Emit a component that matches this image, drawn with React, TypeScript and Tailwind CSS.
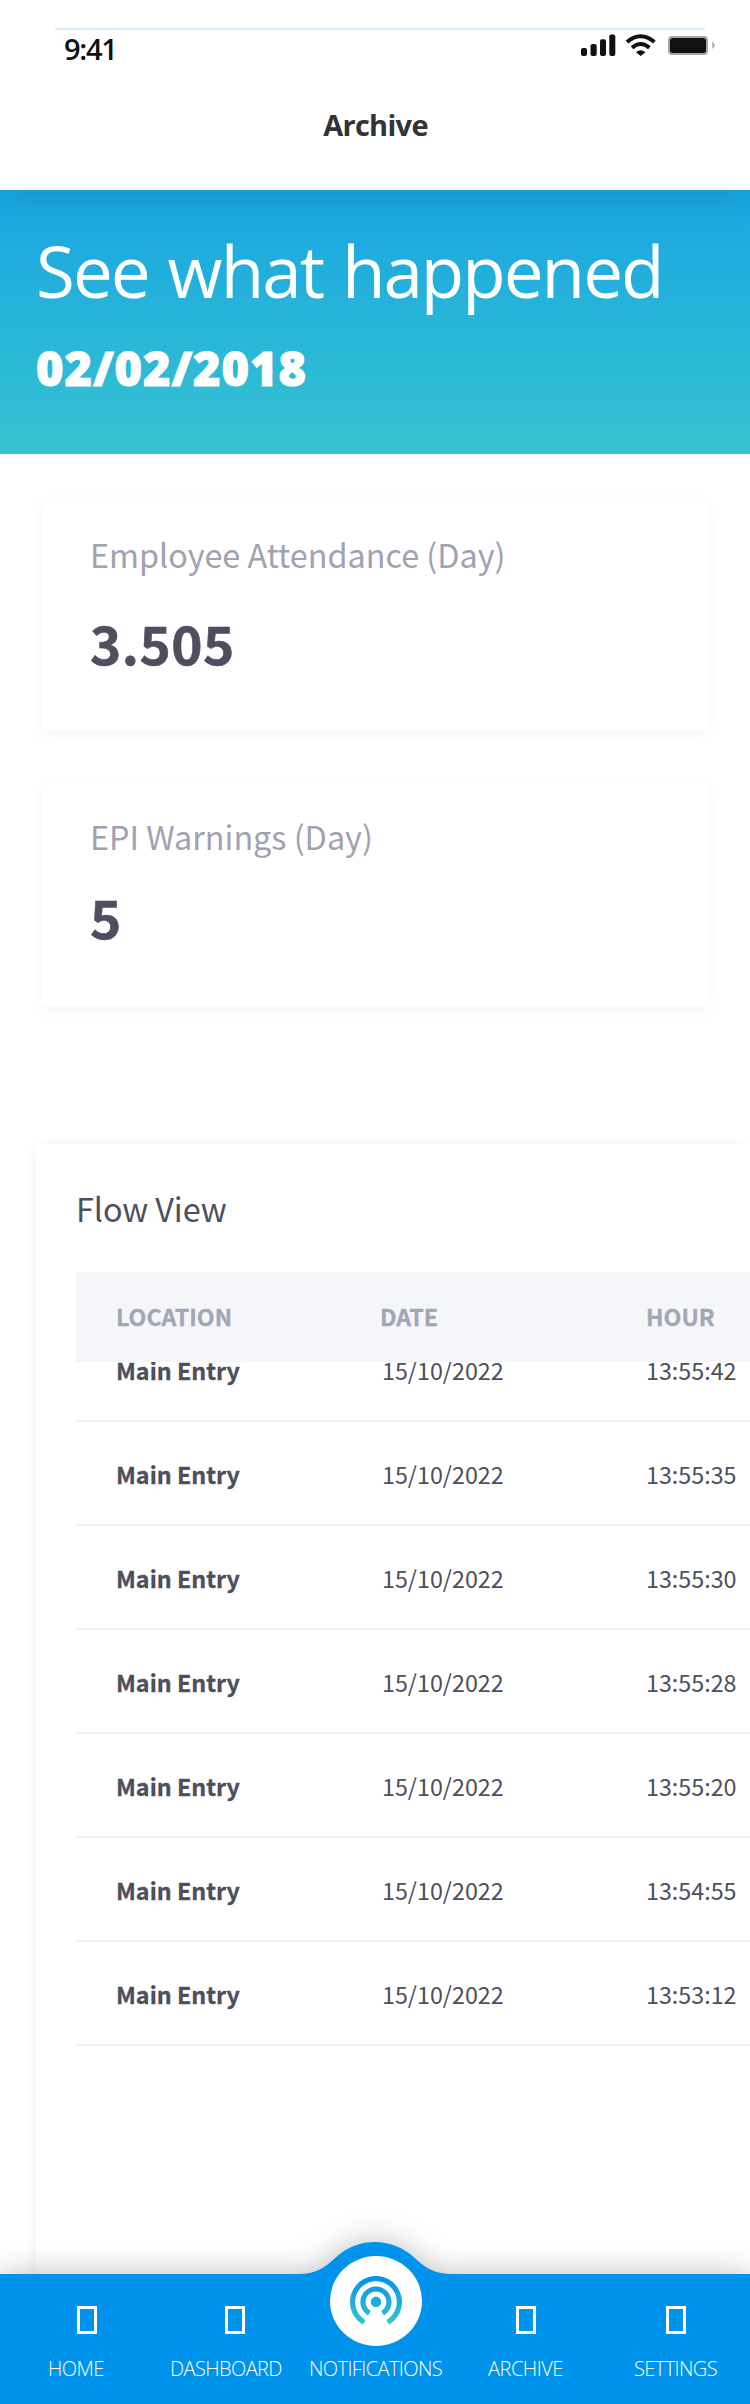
const hours = ["13:55:42", "13:55:35", "13:55:30", "13:55:28", "13:55:20", "13:54:55", "13:53:12"];

const sans = "font-['Noto_Sans_CJK_SC',sans-serif]";

function StatusBar() {
  return (
    <div className="ml-[55px] mt-7 w-[661px]">
      <div className="h-0.5 w-[650px] bg-[#d6eefb]" />
      <div className="flex h-[40px] items-start justify-between">
        <span className="ml-[9px] mt-[-2px] text-[29px] font-semibold leading-[42px] tracking-[-1.3px] text-[#111]">9:41</span>
        <svg className="mt-[2px] h-[28px] w-[136px]" viewBox="580 32 136 28">
          <g fill="#111">
            <rect x="581" y="48" width="6" height="8" rx="2" />
            <rect x="590.5" y="44" width="6.2" height="12" rx="2" />
            <rect x="600" y="39.2" width="6" height="16.8" rx="2" />
            <rect x="609.3" y="34.5" width="6" height="21.5" rx="2" />
            <path d="M636 52.2Q640.7 48.3 645.4 52.2L640.7 56Z" />
          </g>
          <g fill="none" stroke="#111" strokeWidth="4">
            <path d="M627 42Q640.7 30.5 654.4 42" />
            <path d="M632 47.7Q640.7 40.3 649.4 47.7" />
          </g>
          <rect x="669" y="37" width="38" height="17" rx="3" fill="none" stroke="#a6a6a6" strokeWidth="2" />
          <rect x="670" y="38" width="36" height="15" rx="2.5" fill="#111" />
          <path d="M712.3 41.5Q717 45.3 712.3 49Z" fill="#a6a6a6" />
        </svg>
      </div>
    </div>
  );
}

function StatCard({ label, value, className, gap }: { label: string; value: string; className: string; gap: string }) {
  return (
    <section className={`ml-[42px] w-[666px] bg-white pl-[48px] pt-[35px] shadow-[0_5px_15px_rgba(0,0,0,0.04)] ${sans} ${className}`}>
      <h2 className="whitespace-nowrap text-[32.4px] leading-[40px] tracking-[-0.03px] text-[#a2a1b1]">{label}</h2>
      <p className={`text-[53px] font-bold leading-[60px] tracking-[0.5px] text-[#4d4f5e] [-webkit-text-stroke:0.6px_#4d4f5e] ${gap}`}>{value}</p>
    </section>
  );
}

function FlowView() {
  return (
    <section className={`ml-[36px] mt-[138px] h-[1130px] bg-white pl-[40px] pt-[44px] text-[#4d4f5c] shadow-[0_3px_15px_rgba(0,0,0,0.06)] ${sans}`}>
      <h2 className="text-[32.4px] leading-[40px] tracking-[-0.1px]">Flow View</h2>
      <div className="relative z-10 mt-[44px] grid h-[90px] grid-cols-[264px_266px_1fr] items-center bg-[#f5f6fa] pb-[2px] pl-[40px] text-[23.2px] font-bold text-[#a3a6b4] [-webkit-text-stroke:0.3px_#a3a6b4]">
        <span>LOCATION</span>
        <span>DATE</span>
        <span>HOUR</span>
      </div>
      <div className="-mt-[44px]">
        {hours.map((hour) => (
          <div key={hour} className="grid h-[104px] grid-cols-[266px_264px_1fr] items-center border-b-2 border-[#f1f1f3] pl-[40px] pt-[2px] text-[23.3px]">
            <span className="font-bold [-webkit-text-stroke:0.3px_#4d4f5c]">Main Entry</span>
            <span>15/10/2022</span>
            <span>{hour}</span>
          </div>
        ))}
      </div>
    </section>
  );
}

function NavItem({ label, icon, text }: { label: string; icon: string; text: string }) {
  return (
    <div className="flex flex-col items-start">
      <span className={`h-[28px] w-[20px] border-[3px] border-white ${icon}`} />
      <span className={`mt-[21px] whitespace-nowrap leading-[28px] ${text}`}>{label}</span>
    </div>
  );
}

function BottomNav() {
  return (
    <nav className="relative h-[130px] text-[20px] font-light text-white">
      <svg className="absolute left-0 top-[-74px] h-[204px] w-[750px]" viewBox="0 -74 750 204">
        <defs>
          <filter id="navShadow" x="-10%" y="-70%" width="120%" height="200%">
            <feDropShadow dx="0" dy="0" stdDeviation="15" floodColor="#000" floodOpacity="0.26" />
          </filter>
          <linearGradient id="tether" x1="0" y1="0" x2="0" y2="1">
            <stop offset="0" stopColor="#0093ec" />
            <stop offset="1" stopColor="#36c4d0" />
          </linearGradient>
        </defs>
        <path
          d="M0 0H298C315 0 324 -6 334 -15C348 -28 361 -32 375 -32C389 -32 403 -27 416 -15C426 -5 437 0 452 0H750V130H0Z"
          fill="#0293eb"
          filter="url(#navShadow)"
        />
        <ellipse cx="376" cy="27" rx="46" ry="45" fill="#fff" />
        <path
          transform="translate(344.8 -5.8) scale(2.6)"
          fill="url(#tether)"
          d="M12 11c-1.1 0-2 .9-2 2s.9 2 2 2 2-.9 2-2-.9-2-2-2zm6 2c0-3.31-2.69-6-6-6s-6 2.69-6 6c0 2.22 1.21 4.15 3 5.19l1-1.74c-1.19-.7-2-1.97-2-3.45 0-2.21 1.79-4 4-4s4 1.79 4 4c0 1.48-.81 2.75-2 3.45l1 1.74c1.79-1.04 3-2.97 3-5.19zM12 3C6.48 3 2 7.48 2 13c0 3.7 2.01 6.92 4.99 8.65l1-1.73C5.61 18.53 4 15.96 4 13c0-4.42 3.58-8 8-8s8 3.58 8 8c0 2.96-1.61 5.53-4 6.92l1 1.73c2.99-1.73 5-4.95 5-8.65 0-5.52-4.48-10-10-10z"
        />
      </svg>
      <div className="relative grid grid-cols-[122px_140px_177px_147px_1fr] pl-[47px] pt-[32px]">
        <NavItem label="HOME" icon="ml-[30px]" text="ml-[1px] tracking-[-0.6px]" />
        <NavItem label="DASHBOARD" icon="ml-[56px]" text="ml-[1px] tracking-[-0.6px]" />
        <NavItem label="NOTIFICATIONS" icon="invisible" text="tracking-[-0.6px]" />
        <NavItem label="ARCHIVE" icon="ml-[30px]" text="ml-[2px] tracking-[-0.5px]" />
        <NavItem label="SETTINGS" icon="ml-[33px]" text="ml-[1px] tracking-[-0.6px]" />
      </div>
    </nav>
  );
}

export default function App() {
  return (
    <main className="h-[2404px] w-[750px] overflow-hidden bg-white font-['Open_Sans',sans-serif]">
      <header className="relative flex h-[190px] flex-col bg-white shadow-[0_0_40px_rgba(0,0,0,0.14)]">
        <StatusBar />
        <h1 className="mt-[34px] pl-[1px] text-center text-[29px] font-bold leading-[42px] tracking-[-0.7px] text-[#333]">Archive</h1>
      </header>
      <div className="h-[264px] bg-linear-to-b from-[#1aa5e1] to-[#36c3d0] pl-[36px] pt-[33px] text-white">
        <p className="whitespace-nowrap text-[71px] font-normal leading-[96px] tracking-[-2px] [word-spacing:2.5px]">See what happened</p>
        <p className="mt-[14px] text-[47px] font-extrabold leading-[70px] tracking-[0.9px] [-webkit-text-stroke:1px_white]">02/02/2018</p>
      </div>
      <StatCard label="Employee Attendance (Day)" value="3.505" className="mt-[45px] h-[231px]" gap="mt-[38px]" />
      <StatCard label="EPI Warnings (Day)" value="5" className="mt-[51px] h-[225px]" gap="mt-[30px]" />
      <FlowView />
      <BottomNav />
    </main>
  );
}
